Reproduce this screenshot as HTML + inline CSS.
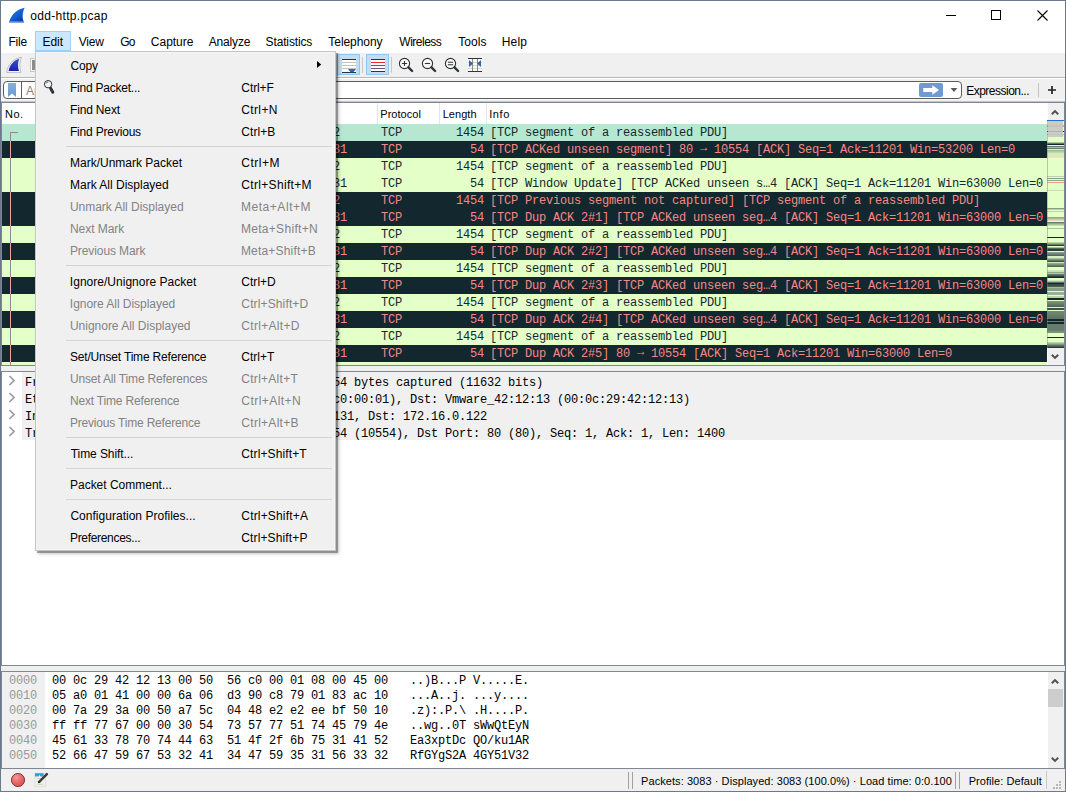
<!DOCTYPE html><html><head><meta charset="utf-8"><title>odd-http.pcap</title><style>
*{box-sizing:border-box;margin:0;padding:0}
html,body{width:1066px;height:792px;overflow:hidden;background:#fff}
body{font-family:"Liberation Sans",sans-serif;font-size:12px;color:#000;position:relative}
#win{position:absolute;left:0;top:0;width:1066px;height:792px;overflow:hidden;background:#f0f0f0}
.b{position:absolute}
.t{position:absolute;white-space:pre;line-height:1}
.mono{font-family:"Liberation Mono",monospace;font-size:12px;letter-spacing:-0.201px}
.ui{font-family:"Liberation Sans",sans-serif;font-size:12px}
.tah{font-family:"Liberation Sans",sans-serif;font-size:11px}
.row{position:absolute;left:2px;width:1045px;height:17px}
.row .t{top:3px}
.lg{background:#e4ffc7;color:#12272e}
.dk{background:#12272e;color:#f78787}
.sel{background:#b6e8d1;color:#12272e}
.mi{position:absolute;left:2px;width:297px;height:22px}
.mi .l{position:absolute;left:33px;top:6px;white-space:pre;line-height:1}
.mi .s{position:absolute;left:204px;top:6px;white-space:pre;line-height:1}
.dis{color:#838383}
.ar{position:relative;top:-2px;font-weight:bold}
.sep{position:absolute;left:30px;width:266px;height:1px;background:#d4d4d4}
svg{position:absolute;overflow:visible}
</style></head><body><div id="win">
<div class="b" style="left:0px;top:0px;width:1066px;height:30px;background:#fff;"></div>
<svg style="left:0;top:0" width="40" height="30" viewBox="0 0 40 30"><defs><linearGradient id="fin" x1="0.2" y1="0" x2="0.9" y2="1"><stop offset="0" stop-color="#1f78ea"/><stop offset="0.55" stop-color="#0f5ad2"/><stop offset="1" stop-color="#08309a"/></linearGradient></defs><path d="M9 22.6 C10.5 16.5 15 9.5 24.6 7.7 C22.6 12 21.6 17.5 24.2 22.6 Z" fill="url(#fin)"/><path d="M9 22.6 L24.2 22.6 L23.8 21.2 L10 21.2 Z" fill="#7da6ea" opacity="0.85"/></svg>
<div class="t ui" style="left:30.32px;letter-spacing:0.307px;top:10px">odd-http.pcap</div>
<svg style="left:928px;top:0" width="138" height="30" viewBox="0 0 138 30"><g stroke="#000" stroke-width="1" fill="none" shape-rendering="crispEdges"><path d="M18 15.5h10"/><rect x="63.5" y="10.5" width="9" height="9"/></g><path d="M109.5 10.5l10 10M119.5 10.5l-10 10" stroke="#000" stroke-width="1.1" fill="none"/></svg>
<div class="b" style="left:1px;top:30px;width:1064px;height:22px;background:#fff;"></div>
<div class="b" style="left:35px;top:31px;width:36px;height:20px;background:#cce8ff;border:1px solid #99d1ff"></div>
<div class="t ui" style="left:8.48px;letter-spacing:-0.180px;top:36px">File</div>
<div class="t ui" style="left:42.48px;letter-spacing:-0.052px;top:36px">Edit</div>
<div class="t ui" style="left:78.67px;letter-spacing:-0.201px;top:36px">View</div>
<div class="t ui" style="left:120.14px;letter-spacing:-0.600px;top:36px">Go</div>
<div class="t ui" style="left:150.84px;letter-spacing:-0.015px;top:36px">Capture</div>
<div class="t ui" style="left:208.68px;letter-spacing:-0.154px;top:36px">Analyze</div>
<div class="t ui" style="left:265.59px;letter-spacing:-0.140px;top:36px">Statistics</div>
<div class="t ui" style="left:328.37px;letter-spacing:-0.063px;top:36px">Telephony</div>
<div class="t ui" style="left:399.32px;letter-spacing:-0.499px;top:36px">Wireless</div>
<div class="t ui" style="left:458.17px;letter-spacing:0.063px;top:36px">Tools</div>
<div class="t ui" style="left:501.68px;letter-spacing:0.214px;top:36px">Help</div>
<div class="b" style="left:1px;top:52px;width:1064px;height:26px;background:#f0f0f0;border-top:1px solid #fff;border-bottom:1px solid #b8b8b8"></div>
<svg style="left:0;top:52px" width="40" height="26" viewBox="0 52 40 26"><defs><linearGradient id="fin2" x1="0" y1="0" x2="0" y2="1"><stop offset="0" stop-color="#3c52d6"/><stop offset="1" stop-color="#1422a8"/></linearGradient></defs><path d="M6.6 72.4 C7.6 65 13 58.6 21.4 57.3 C19.4 62 19.2 67.5 21 72.4 Z" fill="#fafafa" stroke="#b4b4b4" stroke-width="0.9"/><path d="M8.6 71 C9.4 65.5 13.5 60.4 19.2 58.8 C17.6 63 17.8 67.5 19 71 Z" fill="url(#fin2)"/><rect x="30.5" y="58.5" width="8" height="13" fill="#fdfdfd" stroke="#c6c6c6"/><rect x="32" y="60" width="6" height="10" fill="#8c8c8c"/></svg>
<div class="b" style="left:337px;top:54px;width:23px;height:21px;background:#c4dcf2;border:1px solid #92c6f3"></div>
<div class="b" style="left:366px;top:54px;width:23px;height:21px;background:#c4dcf2;border:1px solid #92c6f3"></div>
<div class="b" style="left:362px;top:57px;width:1px;height:16px;background:#c8c8c8;"></div>
<div class="b" style="left:391px;top:57px;width:1px;height:16px;background:#c8c8c8;"></div>
<svg style="left:334px;top:52px" width="160" height="26" viewBox="334 52 160 26"><g shape-rendering="crispEdges"><rect x="342" y="60" width="14" height="12" fill="#fcfcfa"/><rect x="342" y="59" width="14" height="1" fill="#2e3436"/><rect x="342" y="62" width="14" height="1" fill="#c3c6bd"/><rect x="342" y="65" width="14" height="1" fill="#c3c6bd"/><rect x="342" y="68" width="14" height="1" fill="#c3c6bd"/><rect x="342" y="72" width="14" height="1" fill="#2e3436"/><rect x="371" y="60" width="14" height="11" fill="#fcfcfc"/><rect x="371" y="59" width="14" height="1" fill="#2e3436"/><rect x="371" y="62" width="14" height="1" fill="#ef2929"/><rect x="371" y="65" width="14" height="1" fill="#3465a4"/><rect x="371" y="68" width="14" height="1" fill="#75507b"/><rect x="371" y="71" width="14" height="1" fill="#2e3436"/></g><path d="M348 69 h8 l-2.6 3.3 h-2.8 Z" fill="#3465a4"/>
<circle cx="404.5" cy="63.5" r="5.1" fill="#fafafa" stroke="#2e3436" stroke-width="1.1"/><path d="M408.5 67.4 L412.1 71" stroke="#2e3436" stroke-width="2.4" stroke-linecap="round"/>
<path d="M401.9 63.5h5.2M404.5 60.9v5.2" stroke="#2e3436" stroke-width="1.1"/>
<circle cx="427.5" cy="63.5" r="5.1" fill="#fafafa" stroke="#2e3436" stroke-width="1.1"/><path d="M431.5 67.4 L435.1 71" stroke="#2e3436" stroke-width="2.4" stroke-linecap="round"/>
<path d="M424.9 63.5h5.2" stroke="#2e3436" stroke-width="1.1"/>
<circle cx="450.5" cy="63.5" r="5.1" fill="#fafafa" stroke="#2e3436" stroke-width="1.1"/><path d="M454.5 67.4 L458.1 71" stroke="#2e3436" stroke-width="2.4" stroke-linecap="round"/>
<path d="M447.9 62.3h5.2M447.9 64.7h5.2" stroke="#2e3436" stroke-width="1.1"/>
<g shape-rendering="crispEdges"><rect x="468" y="59" width="14" height="12" fill="#fbfbf9"/><rect x="468" y="62" width="14" height="1" fill="#d3d7cf"/><rect x="468" y="65" width="14" height="1" fill="#d3d7cf"/><rect x="468" y="68" width="14" height="1" fill="#d3d7cf"/><rect x="472" y="59" width="1" height="12" fill="#888a85"/><rect x="477" y="59" width="1" height="12" fill="#888a85"/><rect x="468" y="58" width="14" height="1" fill="#2e3436"/><rect x="468" y="71" width="14" height="1" fill="#2e3436"/></g><path d="M469 60 l4 3.5 l-4 3.5 Z M481 60 l-4 3.5 l4 3.5 Z" fill="#3465a4"/></svg>
<div class="b" style="left:1px;top:78px;width:1064px;height:23px;background:#f0f0f0;border-top:1px solid #fff"></div>
<div class="b" style="left:1px;top:99px;width:1064px;height:1px;background:#f8f8f8;"></div>
<div class="b" style="left:3px;top:81px;width:959px;height:18px;background:#fff;border:1px solid #5c5c5c;border-radius:4px"></div>
<div class="b" style="left:21px;top:82px;width:1px;height:16px;background:#5c5c5c;"></div>
<svg style="left:8px;top:83px" width="8" height="14" viewBox="0 0 8 14"><defs><linearGradient id="bm" x1="0" y1="0" x2="0" y2="1"><stop offset="0" stop-color="#86b0dc"/><stop offset="1" stop-color="#6b99d0"/></linearGradient></defs><path d="M0 0h8v14l-4-3.6L0 14Z" fill="url(#bm)"/></svg>
<div class="t ui" style="left:26px;top:85px;color:#828282">Apply a display filter ... &lt;Ctrl-/&gt;</div>
<div class="b" style="left:919px;top:83px;width:24px;height:14px;background:#6f9bd3;border-radius:2px"></div>
<svg style="left:919px;top:83px" width="24" height="14" viewBox="0 0 24 14"><path d="M4.3 5h9V2.2L20 7l-6.7 4.8V9h-9Z" fill="#fff"/></svg>
<svg style="left:950px;top:87px" width="8" height="6" viewBox="0 0 8 6"><path d="M0.6 1h6.8L4 5Z" fill="#5a5a5a"/></svg>
<div class="t ui" style="left:966.18px;letter-spacing:-0.501px;top:85px">Expression...</div>
<div class="b" style="left:1038px;top:83px;width:1px;height:14px;background:#c4c4c4;"></div>
<svg style="left:1046px;top:84px" width="12" height="12" viewBox="0 0 12 12"><path d="M6 2v8M2 6h8" stroke="#222" stroke-width="1.7"/></svg>
<div class="b" style="left:1px;top:101px;width:1064px;height:1px;background:#c4c6ca;"></div>
<div class="b" style="left:1px;top:102px;width:1064px;height:264px;background:#fff;border:1px solid #7f8794"></div>
<div class="b" style="left:252px;top:103px;width:1px;height:21px;background:#e5e5e5;"></div>
<div class="b" style="left:377px;top:103px;width:1px;height:21px;background:#e5e5e5;"></div>
<div class="b" style="left:439px;top:103px;width:1px;height:21px;background:#e5e5e5;"></div>
<div class="b" style="left:486px;top:103px;width:1px;height:21px;background:#e5e5e5;"></div>
<div class="t tah" style="left:5.09px;letter-spacing:0.473px;top:109px">No.</div>
<div class="t tah" style="left:380.31px;letter-spacing:0.030px;top:109px">Protocol</div>
<div class="t tah" style="left:442.67px;letter-spacing:0.062px;top:109px">Length</div>
<div class="t tah" style="left:489.15px;letter-spacing:0.650px;top:109px">Info</div>
<div class="t tah" style="left:256px;top:109px">Destination</div>
<div class="row sel mono" style="top:124px"><span class="t" style="left:40px">1</span><span class="t" style="left:56px">0.000000</span><span class="t" style="left:138px">200.121.1.131</span><span class="t" style="left:254px">172.16.0.122</span><span class="t" style="left:379px">TCP</span><span class="t" style="left:454px">1454</span><span class="t" style="left:488px">[TCP segment of a reassembled PDU]</span></div>
<div class="row dk mono" style="top:141px"><span class="t" style="left:40px">2</span><span class="t" style="left:56px">0.000026</span><span class="t" style="left:138px">172.16.0.122</span><span class="t" style="left:254px">200.121.1.131</span><span class="t" style="left:379px">TCP</span><span class="t" style="left:468px">54</span><span class="t" style="left:488px">[TCP ACKed unseen segment] 80 <span class="ar">→</span> 10554 [ACK] Seq=1 Ack=11201 Win=53200 Len=0</span></div>
<div class="row lg mono" style="top:158px"><span class="t" style="left:40px">3</span><span class="t" style="left:56px">0.029841</span><span class="t" style="left:138px">200.121.1.131</span><span class="t" style="left:254px">172.16.0.122</span><span class="t" style="left:379px">TCP</span><span class="t" style="left:454px">1454</span><span class="t" style="left:488px">[TCP segment of a reassembled PDU]</span></div>
<div class="row lg mono" style="top:175px"><span class="t" style="left:40px">4</span><span class="t" style="left:56px">0.029914</span><span class="t" style="left:138px">172.16.0.122</span><span class="t" style="left:254px">200.121.1.131</span><span class="t" style="left:379px">TCP</span><span class="t" style="left:468px">54</span><span class="t" style="left:488px">[TCP Window Update] [TCP ACKed unseen s…4 [ACK] Seq=1 Ack=11201 Win=63000 Len=0</span></div>
<div class="row dk mono" style="top:192px"><span class="t" style="left:40px">5</span><span class="t" style="left:56px">0.055233</span><span class="t" style="left:138px">200.121.1.131</span><span class="t" style="left:254px">172.16.0.122</span><span class="t" style="left:379px">TCP</span><span class="t" style="left:454px">1454</span><span class="t" style="left:488px">[TCP Previous segment not captured] [TCP segment of a reassembled PDU]</span></div>
<div class="row dk mono" style="top:209px"><span class="t" style="left:40px">6</span><span class="t" style="left:56px">0.055259</span><span class="t" style="left:138px">172.16.0.122</span><span class="t" style="left:254px">200.121.1.131</span><span class="t" style="left:379px">TCP</span><span class="t" style="left:468px">54</span><span class="t" style="left:488px">[TCP Dup ACK 2#1] [TCP ACKed unseen seg…4 [ACK] Seq=1 Ack=11201 Win=63000 Len=0</span></div>
<div class="row lg mono" style="top:226px"><span class="t" style="left:40px">7</span><span class="t" style="left:56px">0.059982</span><span class="t" style="left:138px">200.121.1.131</span><span class="t" style="left:254px">172.16.0.122</span><span class="t" style="left:379px">TCP</span><span class="t" style="left:454px">1454</span><span class="t" style="left:488px">[TCP segment of a reassembled PDU]</span></div>
<div class="row dk mono" style="top:243px"><span class="t" style="left:40px">8</span><span class="t" style="left:56px">0.060003</span><span class="t" style="left:138px">172.16.0.122</span><span class="t" style="left:254px">200.121.1.131</span><span class="t" style="left:379px">TCP</span><span class="t" style="left:468px">54</span><span class="t" style="left:488px">[TCP Dup ACK 2#2] [TCP ACKed unseen seg…4 [ACK] Seq=1 Ack=11201 Win=63000 Len=0</span></div>
<div class="row lg mono" style="top:260px"><span class="t" style="left:40px">9</span><span class="t" style="left:56px">0.085211</span><span class="t" style="left:138px">200.121.1.131</span><span class="t" style="left:254px">172.16.0.122</span><span class="t" style="left:379px">TCP</span><span class="t" style="left:454px">1454</span><span class="t" style="left:488px">[TCP segment of a reassembled PDU]</span></div>
<div class="row dk mono" style="top:277px"><span class="t" style="left:40px">10</span><span class="t" style="left:56px">0.085236</span><span class="t" style="left:138px">172.16.0.122</span><span class="t" style="left:254px">200.121.1.131</span><span class="t" style="left:379px">TCP</span><span class="t" style="left:468px">54</span><span class="t" style="left:488px">[TCP Dup ACK 2#3] [TCP ACKed unseen seg…4 [ACK] Seq=1 Ack=11201 Win=63000 Len=0</span></div>
<div class="row lg mono" style="top:294px"><span class="t" style="left:40px">11</span><span class="t" style="left:56px">0.090127</span><span class="t" style="left:138px">200.121.1.131</span><span class="t" style="left:254px">172.16.0.122</span><span class="t" style="left:379px">TCP</span><span class="t" style="left:454px">1454</span><span class="t" style="left:488px">[TCP segment of a reassembled PDU]</span></div>
<div class="row dk mono" style="top:311px"><span class="t" style="left:40px">12</span><span class="t" style="left:56px">0.090149</span><span class="t" style="left:138px">172.16.0.122</span><span class="t" style="left:254px">200.121.1.131</span><span class="t" style="left:379px">TCP</span><span class="t" style="left:468px">54</span><span class="t" style="left:488px">[TCP Dup ACK 2#4] [TCP ACKed unseen seg…4 [ACK] Seq=1 Ack=11201 Win=63000 Len=0</span></div>
<div class="row lg mono" style="top:328px"><span class="t" style="left:40px">13</span><span class="t" style="left:56px">0.115320</span><span class="t" style="left:138px">200.121.1.131</span><span class="t" style="left:254px">172.16.0.122</span><span class="t" style="left:379px">TCP</span><span class="t" style="left:454px">1454</span><span class="t" style="left:488px">[TCP segment of a reassembled PDU]</span></div>
<div class="row dk mono" style="top:345px"><span class="t" style="left:40px">14</span><span class="t" style="left:56px">0.115344</span><span class="t" style="left:138px">172.16.0.122</span><span class="t" style="left:254px">200.121.1.131</span><span class="t" style="left:379px">TCP</span><span class="t" style="left:468px">54</span><span class="t" style="left:488px">[TCP Dup ACK 2#5] 80 <span class="ar">→</span> 10554 [ACK] Seq=1 Ack=11201 Win=63000 Len=0</span></div>
<div class="row lg" style="top:362px;height:3px"></div>
<div class="b" style="left:10px;top:132px;width:8px;height:1px;background:#8c8c8c;"></div>
<div class="b" style="left:10px;top:132px;width:1px;height:9px;background:#8c8c8c;"></div>
<div class="b" style="left:10px;top:141px;width:1px;height:17px;background:#f2a3a3;"></div>
<div class="b" style="left:10px;top:158px;width:1px;height:17px;background:#8c8c8c;"></div>
<div class="b" style="left:10px;top:175px;width:1px;height:17px;background:#8c8c8c;"></div>
<div class="b" style="left:10px;top:192px;width:1px;height:17px;background:#f2a3a3;"></div>
<div class="b" style="left:10px;top:209px;width:1px;height:17px;background:#f2a3a3;"></div>
<div class="b" style="left:10px;top:226px;width:1px;height:17px;background:#8c8c8c;"></div>
<div class="b" style="left:10px;top:243px;width:1px;height:17px;background:#f2a3a3;"></div>
<div class="b" style="left:10px;top:260px;width:1px;height:17px;background:#8c8c8c;"></div>
<div class="b" style="left:10px;top:277px;width:1px;height:17px;background:#f2a3a3;"></div>
<div class="b" style="left:10px;top:294px;width:1px;height:17px;background:#8c8c8c;"></div>
<div class="b" style="left:10px;top:311px;width:1px;height:17px;background:#f2a3a3;"></div>
<div class="b" style="left:10px;top:328px;width:1px;height:17px;background:#8c8c8c;"></div>
<div class="b" style="left:10px;top:345px;width:1px;height:17px;background:#f2a3a3;"></div>
<div class="b" style="left:10px;top:362px;width:1px;height:3px;background:#8c8c8c;"></div>
<div class="b" style="left:1047px;top:103px;width:17px;height:262px;background:#fcfcfc;"></div>
<div class="b" style="left:1048px;top:103px;width:16px;height:262px;background:#f0f0f0;"></div>
<svg style="left:1047px;top:121px" width="17" height="227" viewBox="0 121 17 227" shape-rendering="crispEdges"><rect x="0" y="121" width="17" height="227" fill="#e4ffc7"/><rect x="0" y="125" width="17" height="1" fill="#a5be99"/><rect x="0" y="126" width="17" height="1" fill="#a5be99"/><rect x="0" y="131" width="17" height="1" fill="#12272e"/><rect x="0" y="134" width="17" height="1" fill="#a5be99"/><rect x="0" y="142" width="17" height="1" fill="#b0c9a1"/><rect x="0" y="143" width="17" height="1" fill="#617867"/><rect x="0" y="144" width="17" height="1" fill="#12272e"/><rect x="0" y="146" width="17" height="1" fill="#667d6b"/><rect x="0" y="147" width="17" height="1" fill="#a5be99"/><rect x="0" y="148" width="17" height="1" fill="#667d6b"/><rect x="0" y="149" width="17" height="1" fill="#daf4bf"/><rect x="0" y="150" width="17" height="1" fill="#a1ba96"/><rect x="0" y="151" width="17" height="1" fill="#b0caa1"/><rect x="0" y="152" width="17" height="1" fill="#c0daac"/><rect x="0" y="153" width="17" height="1" fill="#cfe9b8"/><rect x="0" y="154" width="17" height="1" fill="#d3eebb"/><rect x="0" y="155" width="17" height="1" fill="#d3eebb"/><rect x="0" y="156" width="17" height="1" fill="#ecdeb6"/><rect x="0" y="157" width="17" height="1" fill="#eae8be"/><rect x="0" y="176" width="17" height="1" fill="#bad4a8"/><rect x="0" y="178" width="17" height="1" fill="#869e82"/><rect x="0" y="180" width="17" height="1" fill="#94ad8d"/><rect x="0" y="182" width="17" height="1" fill="#e2aa82"/><rect x="0" y="190" width="17" height="1" fill="#c4dfb0"/><rect x="0" y="208" width="17" height="1" fill="#869e82"/><rect x="0" y="209" width="17" height="1" fill="#b6cfa5"/><rect x="0" y="211" width="17" height="1" fill="#bed8ab"/><rect x="0" y="217" width="17" height="1" fill="#90a98a"/><rect x="0" y="218" width="17" height="1" fill="#a5be99"/><rect x="0" y="219" width="17" height="1" fill="#bad4a8"/><rect x="0" y="220" width="17" height="1" fill="#eed6b4"/><rect x="0" y="222" width="17" height="1" fill="#667d6b"/><rect x="0" y="223" width="17" height="1" fill="#90a98a"/><rect x="0" y="224" width="17" height="1" fill="#aac49d"/><rect x="0" y="225" width="17" height="1" fill="#c4dfb0"/><rect x="0" y="228" width="17" height="1" fill="#a9c39c"/><rect x="0" y="237" width="17" height="1" fill="#12272e"/><rect x="0" y="242" width="17" height="1" fill="#bad4a8"/><rect x="0" y="243" width="17" height="1" fill="#90a98a"/><rect x="0" y="244" width="17" height="1" fill="#667d6b"/><rect x="0" y="245" width="17" height="1" fill="#273d3d"/><rect x="0" y="247" width="17" height="1" fill="#a5be99"/><rect x="0" y="248" width="17" height="1" fill="#51685c"/><rect x="0" y="249" width="17" height="1" fill="#273d3d"/><rect x="0" y="250" width="17" height="1" fill="#273d3d"/><rect x="0" y="252" width="17" height="1" fill="#869e82"/><rect x="0" y="253" width="17" height="1" fill="#748c75"/><rect x="0" y="254" width="17" height="1" fill="#627a69"/><rect x="0" y="255" width="17" height="1" fill="#51685c"/><rect x="0" y="256" width="17" height="1" fill="#d7f2be"/><rect x="0" y="257" width="17" height="1" fill="#d7f2be"/><rect x="0" y="258" width="17" height="1" fill="#a5be99"/><rect x="0" y="259" width="17" height="1" fill="#829a80"/><rect x="0" y="260" width="17" height="1" fill="#5f7666"/><rect x="0" y="261" width="17" height="1" fill="#3c524d"/><rect x="0" y="262" width="17" height="1" fill="#cfe9b8"/><rect x="0" y="263" width="17" height="1" fill="#90a98a"/><rect x="0" y="264" width="17" height="1" fill="#7b937a"/><rect x="0" y="265" width="17" height="1" fill="#667d6b"/><rect x="0" y="266" width="17" height="1" fill="#51685c"/><rect x="0" y="270" width="17" height="1" fill="#cfe9b8"/><rect x="0" y="271" width="17" height="1" fill="#c4dfb0"/><rect x="0" y="272" width="17" height="1" fill="#90a98a"/><rect x="0" y="273" width="17" height="1" fill="#b0c9a1"/><rect x="0" y="274" width="17" height="1" fill="#667d6b"/><rect x="0" y="275" width="17" height="1" fill="#4a6157"/><rect x="0" y="276" width="17" height="1" fill="#2e4442"/><rect x="0" y="277" width="17" height="1" fill="#12272e"/><rect x="0" y="280" width="17" height="1" fill="#cfe9b8"/><rect x="0" y="281" width="17" height="1" fill="#a5be99"/><rect x="0" y="282" width="17" height="1" fill="#5c7364"/><rect x="0" y="283" width="17" height="1" fill="#12272e"/><rect x="0" y="284" width="17" height="1" fill="#324745"/><rect x="0" y="285" width="17" height="1" fill="#3c524d"/><rect x="0" y="286" width="17" height="1" fill="#465d54"/><rect x="0" y="287" width="17" height="1" fill="#a5be99"/><rect x="0" y="288" width="17" height="1" fill="#869e82"/><rect x="0" y="289" width="17" height="1" fill="#869e82"/><rect x="0" y="290" width="17" height="1" fill="#869e82"/><rect x="0" y="292" width="17" height="1" fill="#9ab391"/><rect x="0" y="293" width="17" height="1" fill="#9ab391"/><rect x="0" y="294" width="17" height="1" fill="#9ab391"/><rect x="0" y="296" width="17" height="1" fill="#bad4a8"/><rect x="0" y="297" width="17" height="1" fill="#bad4a8"/><rect x="0" y="298" width="17" height="1" fill="#12272e"/><rect x="0" y="299" width="17" height="1" fill="#12272e"/><rect x="0" y="301" width="17" height="1" fill="#7b937a"/><rect x="0" y="302" width="17" height="1" fill="#738a74"/><rect x="0" y="303" width="17" height="1" fill="#6a826e"/><rect x="0" y="304" width="17" height="1" fill="#627968"/><rect x="0" y="305" width="17" height="1" fill="#597062"/><rect x="0" y="306" width="17" height="1" fill="#51685c"/><rect x="0" y="307" width="17" height="1" fill="#daf4bf"/><rect x="0" y="308" width="17" height="1" fill="#3c524d"/><rect x="0" y="309" width="17" height="1" fill="#3c524d"/><rect x="0" y="311" width="17" height="1" fill="#708873"/><rect x="0" y="312" width="17" height="1" fill="#6e8571"/><rect x="0" y="313" width="17" height="1" fill="#6a826e"/><rect x="0" y="314" width="17" height="1" fill="#687f6c"/><rect x="0" y="315" width="17" height="1" fill="#647c6a"/><rect x="0" y="316" width="17" height="1" fill="#627968"/><rect x="0" y="317" width="17" height="1" fill="#5e7666"/><rect x="0" y="318" width="17" height="1" fill="#5c7364"/><rect x="0" y="319" width="17" height="1" fill="#12272e"/><rect x="0" y="320" width="17" height="1" fill="#12272e"/><rect x="0" y="321" width="17" height="1" fill="#667d6b"/><rect x="0" y="322" width="17" height="1" fill="#12272e"/><rect x="0" y="323" width="17" height="1" fill="#12272e"/><rect x="0" y="324" width="17" height="1" fill="#667d6b"/><rect x="0" y="325" width="17" height="1" fill="#667d6b"/><rect x="0" y="326" width="17" height="1" fill="#667d6b"/><rect x="0" y="327" width="17" height="1" fill="#667d6b"/><rect x="0" y="328" width="17" height="1" fill="#667d6b"/><rect x="0" y="329" width="17" height="1" fill="#667d6b"/><rect x="0" y="330" width="17" height="1" fill="#667d6b"/><rect x="0" y="331" width="17" height="1" fill="#7b937a"/><rect x="0" y="332" width="17" height="1" fill="#7b937a"/><rect x="0" y="337" width="17" height="1" fill="#12272e"/><rect x="0" y="342" width="17" height="1" fill="#bad4a8"/><rect x="0" y="343" width="17" height="1" fill="#9db693"/><rect x="0" y="344" width="17" height="1" fill="#7f977e"/><rect x="0" y="345" width="17" height="1" fill="#627968"/><rect x="0" y="346" width="17" height="1" fill="#445b53"/><rect x="0" y="347" width="17" height="1" fill="#273d3d"/><rect x="0" y="121" width="1" height="227" fill="#7a8a6a" opacity="0.45"/></svg><div class="b" style="left:1047px;top:120px;width:17px;height:1px;background:#2b70cc"></div><div class="b" style="left:1048px;top:121px;width:15px;height:16px;background:rgba(198,198,198,0.88)"></div>
<svg style="left:1050.3px;top:108.5px" width="10" height="7" viewBox="0 0 10 7"><path d="M1.8 5.3 L5 2.1 L8.2 5.3" stroke="#505050" stroke-width="2" fill="none"/></svg>
<svg style="left:1050.3px;top:353.1px" width="10" height="7" viewBox="0 0 10 7"><path d="M1.8 1.7 L5 4.9 L8.2 1.7" stroke="#505050" stroke-width="2" fill="none"/></svg>
<div class="b" style="left:1px;top:371px;width:1064px;height:295px;background:#fff;border:1px solid #7f8794"></div>
<div class="b" style="left:22px;top:372px;width:1042px;height:68px;background:#f0f0f0;"></div>
<div class="t mono" style="left:25px;top:377px">Frame 1: 1454 bytes on wire (11632 bits), 1454 bytes captured (11632 bits)</div>
<svg style="left:8px;top:375px" width="8" height="11" viewBox="0 0 8 11"><path d="M1.5 1l4.5 4.5L1.5 10" stroke="#9c9c9c" stroke-width="1.7" fill="none"/></svg>
<div class="t mono" style="left:25px;top:394px">Ethernet II, Src: Vmware_c0:00:01 (00:50:56:c0:00:01), Dst: Vmware_42:12:13 (00:0c:29:42:12:13)</div>
<svg style="left:8px;top:392px" width="8" height="11" viewBox="0 0 8 11"><path d="M1.5 1l4.5 4.5L1.5 10" stroke="#9c9c9c" stroke-width="1.7" fill="none"/></svg>
<div class="t mono" style="left:25px;top:411px">Internet Protocol Version 4, Src: 200.121.1.131, Dst: 172.16.0.122</div>
<svg style="left:8px;top:409px" width="8" height="11" viewBox="0 0 8 11"><path d="M1.5 1l4.5 4.5L1.5 10" stroke="#9c9c9c" stroke-width="1.7" fill="none"/></svg>
<div class="t mono" style="left:25px;top:428px">Transmission Control Protocol, Src Port: 10554 (10554), Dst Port: 80 (80), Seq: 1, Ack: 1, Len: 1400</div>
<svg style="left:8px;top:426px" width="8" height="11" viewBox="0 0 8 11"><path d="M1.5 1l4.5 4.5L1.5 10" stroke="#9c9c9c" stroke-width="1.7" fill="none"/></svg>
<div class="b" style="left:1px;top:671px;width:1064px;height:98px;background:#fff;border:1px solid #7f8794"></div>
<div class="b" style="left:2px;top:672px;width:43px;height:96px;background:#f0f0f0;"></div>
<div class="t mono" style="left:9px;top:675px;color:#9a9a9a">0000</div>
<div class="t mono" style="left:52px;top:675px">00 0c 29 42 12 13 00 50  56 c0 00 01 08 00 45 00</div>
<div class="t mono" style="left:410px;top:675px">..)B...P V.....E.</div>
<div class="t mono" style="left:9px;top:690px;color:#9a9a9a">0010</div>
<div class="t mono" style="left:52px;top:690px">05 a0 01 41 00 00 6a 06  d3 90 c8 79 01 83 ac 10</div>
<div class="t mono" style="left:410px;top:690px">...A..j. ...y....</div>
<div class="t mono" style="left:9px;top:705px;color:#9a9a9a">0020</div>
<div class="t mono" style="left:52px;top:705px">00 7a 29 3a 00 50 a7 5c  04 48 e2 e2 ee bf 50 10</div>
<div class="t mono" style="left:410px;top:705px">.z):.P.\ .H....P.</div>
<div class="t mono" style="left:9px;top:720px;color:#9a9a9a">0030</div>
<div class="t mono" style="left:52px;top:720px">ff ff 77 67 00 00 30 54  73 57 77 51 74 45 79 4e</div>
<div class="t mono" style="left:410px;top:720px">..wg..0T sWwQtEyN</div>
<div class="t mono" style="left:9px;top:735px;color:#9a9a9a">0040</div>
<div class="t mono" style="left:52px;top:735px">45 61 33 78 70 74 44 63  51 4f 2f 6b 75 31 41 52</div>
<div class="t mono" style="left:410px;top:735px">Ea3xptDc QO/ku1AR</div>
<div class="t mono" style="left:9px;top:750px;color:#9a9a9a">0050</div>
<div class="t mono" style="left:52px;top:750px">52 66 47 59 67 53 32 41  34 47 59 35 31 56 33 32</div>
<div class="t mono" style="left:410px;top:750px">RfGYgS2A 4GY51V32</div>
<div class="b" style="left:1048px;top:672px;width:16px;height:96px;background:#f0f0f0;"></div>
<div class="b" style="left:1048px;top:689px;width:15px;height:18px;background:#cdcdcd;"></div>
<svg style="left:1050.3px;top:677.5px" width="10" height="7" viewBox="0 0 10 7"><path d="M1.8 5.3 L5 2.1 L8.2 5.3" stroke="#505050" stroke-width="2" fill="none"/></svg>
<svg style="left:1050.3px;top:756.0px" width="10" height="7" viewBox="0 0 10 7"><path d="M1.8 1.7 L5 4.9 L8.2 1.7" stroke="#505050" stroke-width="2" fill="none"/></svg>
<div class="b" style="left:1px;top:769px;width:1064px;height:22px;background:#f0f0f0;"></div>
<svg style="left:10px;top:772px" width="16" height="16" viewBox="0 0 16 16"><defs><radialGradient id="rc" cx="0.38" cy="0.32" r="0.75"><stop offset="0" stop-color="#f09a9a"/><stop offset="0.6" stop-color="#e66060"/><stop offset="1" stop-color="#df4e4e"/></radialGradient></defs><circle cx="8" cy="8" r="6.6" fill="url(#rc)" stroke="#7c2f35" stroke-width="0.9"/></svg>
<svg style="left:34px;top:772px" width="16" height="16" viewBox="0 0 16 16"><rect x="0.9" y="1.3" width="10.4" height="13" fill="#f3f2ea" stroke="#dcdacd" stroke-width="0.8"/><path d="M1 1.2h8.6v3.4h-3.2l-0.9-1.8l-0.9 1.8H1Z" fill="#2f9fd8"/><path d="M2.8 6.5h4M2.8 9.5h3M2.8 12.3h6.5" stroke="#cfcfc6" stroke-width="1"/><path d="M12.9 2.2 L5.4 9.7" stroke="#3c3c3c" stroke-width="2.5" stroke-linecap="round"/><path d="M3.9 11.3l0.7-2.3 1.7 1.6Z" fill="#111"/></svg>
<div class="b" style="left:628px;top:772px;width:1px;height:17px;background:#a0a0a0;"></div>
<div class="b" style="left:632px;top:772px;width:1px;height:17px;background:#a0a0a0;"></div>
<div class="b" style="left:955px;top:772px;width:1px;height:17px;background:#a0a0a0;"></div>
<div class="b" style="left:959px;top:772px;width:1px;height:17px;background:#a0a0a0;"></div>
<div class="b" style="left:1046px;top:771px;width:1px;height:18px;background:#c8c8c8;"></div>
<div class="t tah" style="left:641.11px;letter-spacing:0.064px;top:776px">Packets: 3083 · Displayed: 3083 (100.0%) · Load time: 0:0.100</div>
<div class="t tah" style="left:968.71px;letter-spacing:0.057px;top:776px">Profile: Default</div>
<svg style="left:1051px;top:779px" width="11" height="11" viewBox="0 0 11 11" shape-rendering="crispEdges"><g fill="#b8b8b8"><rect x="8" y="2" width="2" height="2"/><rect x="5" y="5" width="2" height="2"/><rect x="8" y="5" width="2" height="2"/><rect x="2" y="8" width="2" height="2"/><rect x="5" y="8" width="2" height="2"/><rect x="8" y="8" width="2" height="2"/></g></svg>
<div id="menu" class="b" style="left:35px;top:51px;width:301px;height:500px;background:#f0f0f0;border:1px solid #c4c4c4;box-shadow:inset 1px 1px 0 #f5f5f5,inset -1px -1px 0 #f5f5f5,2px 2px 0.5px rgba(0,0,0,.30),3px 3px 3px rgba(0,0,0,.22)">
<div class="mi ui" style="top:2px"><span class="l" style="left:32.44px;letter-spacing:-0.161px">Copy</span></div>
<div class="mi ui" style="top:24px"><span class="l" style="left:31.98px;letter-spacing:-0.224px">Find Packet...</span><span class="s" style="left:203.34px;letter-spacing:-0.101px">Ctrl+F</span></div>
<div class="mi ui" style="top:46px"><span class="l" style="left:31.98px;letter-spacing:-0.158px">Find Next</span><span class="s" style="left:203.34px;letter-spacing:0.349px">Ctrl+N</span></div>
<div class="mi ui" style="top:68px"><span class="l" style="left:31.98px;letter-spacing:-0.185px">Find Previous</span><span class="s" style="left:203.34px;letter-spacing:0.073px">Ctrl+B</span></div>
<div class="sep" style="top:94px"></div>
<div class="mi ui" style="top:99px"><span class="l" style="left:31.98px;letter-spacing:-0.001px">Mark/Unmark Packet</span><span class="s" style="left:203.34px;letter-spacing:0.492px">Ctrl+M</span></div>
<div class="mi ui" style="top:121px"><span class="l" style="left:31.98px;letter-spacing:-0.000px">Mark All Displayed</span><span class="s" style="left:203.34px;letter-spacing:0.324px">Ctrl+Shift+M</span></div>
<div class="mi ui dis" style="top:143px"><span class="l" style="left:31.90px;letter-spacing:-0.019px">Unmark All Displayed</span><span class="s" style="left:202.88px;letter-spacing:0.558px">Meta+Alt+M</span></div>
<div class="mi ui dis" style="top:165px"><span class="l" style="left:31.98px;letter-spacing:-0.047px">Next Mark</span><span class="s" style="left:202.88px;letter-spacing:0.309px">Meta+Shift+N</span></div>
<div class="mi ui dis" style="top:187px"><span class="l" style="left:31.98px;letter-spacing:-0.098px">Previous Mark</span><span class="s" style="left:202.88px;letter-spacing:0.193px">Meta+Shift+B</span></div>
<div class="sep" style="top:213px"></div>
<div class="mi ui" style="top:218px"><span class="l" style="left:31.85px;letter-spacing:0.020px">Ignore/Unignore Packet</span><span class="s" style="left:203.34px;letter-spacing:0.017px">Ctrl+D</span></div>
<div class="mi ui dis" style="top:240px"><span class="l" style="left:31.85px;letter-spacing:-0.037px">Ignore All Displayed</span><span class="s" style="left:203.34px;letter-spacing:0.135px">Ctrl+Shift+D</span></div>
<div class="mi ui dis" style="top:262px"><span class="l" style="left:31.90px;letter-spacing:-0.006px">Unignore All Displayed</span><span class="s" style="left:203.34px;letter-spacing:0.298px">Ctrl+Alt+D</span></div>
<div class="sep" style="top:288px"></div>
<div class="mi ui" style="top:293px"><span class="l" style="left:31.94px;letter-spacing:-0.182px">Set/Unset Time Reference</span><span class="s" style="left:203.34px;letter-spacing:-0.015px">Ctrl+T</span></div>
<div class="mi ui dis" style="top:315px"><span class="l" style="left:31.90px;letter-spacing:-0.155px">Unset All Time References</span><span class="s" style="left:203.34px;letter-spacing:0.270px">Ctrl+Alt+T</span></div>
<div class="mi ui dis" style="top:337px"><span class="l" style="left:31.98px;letter-spacing:-0.179px">Next Time Reference</span><span class="s" style="left:203.34px;letter-spacing:0.438px">Ctrl+Alt+N</span></div>
<div class="mi ui dis" style="top:359px"><span class="l" style="left:31.98px;letter-spacing:-0.192px">Previous Time Reference</span><span class="s" style="left:203.34px;letter-spacing:0.274px">Ctrl+Alt+B</span></div>
<div class="sep" style="top:385px"></div>
<div class="mi ui" style="top:390px"><span class="l" style="left:32.77px;letter-spacing:-0.076px">Time Shift...</span><span class="s" style="left:203.34px;letter-spacing:0.121px">Ctrl+Shift+T</span></div>
<div class="sep" style="top:416px"></div>
<div class="mi ui" style="top:421px"><span class="l" style="left:31.98px;letter-spacing:-0.006px">Packet Comment...</span></div>
<div class="sep" style="top:447px"></div>
<div class="mi ui" style="top:452px"><span class="l" style="left:32.44px;letter-spacing:0.018px">Configuration Profiles...</span><span class="s" style="left:203.34px;letter-spacing:0.169px">Ctrl+Shift+A</span></div>
<div class="mi ui" style="top:474px"><span class="l" style="left:31.98px;letter-spacing:-0.317px">Preferences...</span><span class="s" style="left:203.34px;letter-spacing:0.124px">Ctrl+Shift+P</span></div>
<svg style="left:0;top:0" width="300" height="60" viewBox="36 52 300 60"><path d="M317 61 L321.2 64.5 L317 68 Z" fill="#000"/><circle cx="48.1" cy="84.2" r="3.7" fill="#f4f4f4" stroke="#2e3436" stroke-width="1"/><path d="M46 83.6 A2.2 2.2 0 0 1 48.3 82" stroke="#2e3436" stroke-width="0.7" fill="none"/><path d="M50.6 88.2 L52.8 92.2" stroke="#2e3436" stroke-width="3" stroke-linecap="round"/></svg>
</div>
<div class="b" style="left:0;top:0;width:1066px;height:792px;border:1px solid #6c788c;pointer-events:none"></div>
</div></body></html>
